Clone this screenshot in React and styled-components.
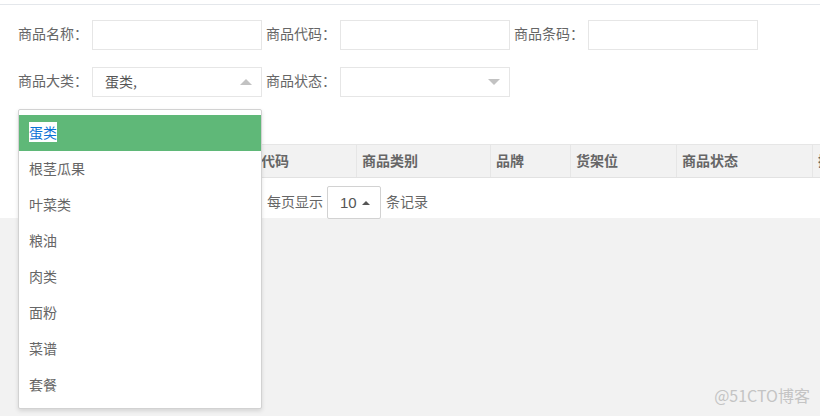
import React from "react";
import styled, { createGlobalStyle } from "styled-components";

const Global = createGlobalStyle`
  html, body { margin: 0; padding: 0; }
  body {
    background: #f2f2f2;
    font-family: "Noto Sans CJK SC", "Microsoft YaHei", "Noto Sans", sans-serif;
    font-size: 14px;
    color: #666;
    overflow: hidden;
  }
`;

const Page = styled.div`
  width: 820px;
  height: 416px;
  position: relative;
  overflow: hidden;
  background: #f2f2f2;
`;

const TopStrip = styled.div`
  height: 4px;
  background: #fff;
  border-bottom: 1px solid #e4e7eb;
`;

const Panel = styled.div`
  position: relative;
  background: #fff;
  height: 213px;
  box-sizing: border-box;
  padding: 15px 0 0 14px;
`;

const FormRow = styled.div`
  display: flex;
  height: 30px;
  margin-bottom: ${(p) => p.$mb || 0}px;
`;

const FormItem = styled.div`
  display: flex;
  align-items: center;
  padding-left: 4px;
`;

const Label = styled.label`
  width: 74px;
  height: 30px;
  box-sizing: border-box;
  padding-bottom: 4px;
  display: flex;
  align-items: center;
  font-size: 14px;
  color: #666;
  white-space: nowrap;
`;

const Input = styled.div`
  width: 170px;
  height: 30px;
  box-sizing: border-box;
  border: 1px solid #e6e6e6;
  background: #fff;
  position: relative;
  display: flex;
  align-items: center;
  padding: 0 0 3px 12px;
  color: #555;
  font-size: 14px;
`;

const Arrow = styled.span`
  position: absolute;
  right: ${(p) => p.$right}px;
  top: 50%;
  margin-top: -3px;
  width: 0;
  height: 0;
  border-left: 6px solid transparent;
  border-right: 6px solid transparent;
  ${(p) =>
    p.$up
      ? "border-bottom: 6px solid #c2c2c2;"
      : "border-top: 6px solid #c2c2c2;"}
`;

const Table = styled.div`
  margin-top: 47px;
  margin-left: 4px;
  display: grid;
  grid-template-columns: 42px 168px 129px 134px 80px 106px 136px 100px;
  height: 34px;
  box-sizing: border-box;
  border-top: 1px solid #e6e6e6;
  border-bottom: 1px solid #e2e2e2;
  background: #f2f2f2;
`;

const Th = styled.div`
  display: flex;
  align-items: center;
  padding: 0 0 2px 5px;
  font-weight: 700;
  color: #666;
  font-size: 14px;
  white-space: nowrap;
  overflow: hidden;
  border-right: 1px solid #e6e6e6;
`;

const Pager = styled.div`
  display: flex;
  align-items: center;
  margin-top: 8px;
  margin-left: 4px;
  height: 33px;
  font-size: 14px;
  color: #666;
`;

const PagerText = styled.span`
  margin: 0 ${(p) => p.$mr || 0}px 0 ${(p) => p.$ml || 0}px;
  padding-bottom: 3px;
  white-space: nowrap;
`;

const SizeSelect = styled.div`
  width: 54px;
  height: 33px;
  box-sizing: border-box;
  border: 1px solid #d2d2d2;
  border-radius: 2px;
  display: flex;
  align-items: center;
  padding-left: 12px;
  gap: 5px;
  color: #555;
  font-family: "Liberation Sans", Arial, sans-serif;
  font-size: 15px;
`;

const SmallUp = styled.span`
  width: 0;
  height: 0;
  border-left: 4px solid transparent;
  border-right: 4px solid transparent;
  border-bottom: 4px solid #555;
`;

const Dropdown = styled.ul`
  position: absolute;
  left: 18px;
  top: 104px;
  width: 244px;
  box-sizing: border-box;
  margin: 0;
  padding: 5px 0;
  list-style: none;
  background: #fff;
  border: 1px solid #d2d2d2;
  border-radius: 2px;
  box-shadow: 0 2px 4px rgba(0, 0, 0, 0.12);
  z-index: 10;
`;

const Option = styled.li`
  height: 36px;
  line-height: 34px;
  padding-left: 10px;
  color: #666;
  font-size: 14px;
  background: ${(p) => (p.$active ? "#5fb878" : "#fff")};
`;

const Selected = styled.span`
  background: #fff;
  color: #0a72d6;
`;

const Watermark = styled.div`
  position: absolute;
  right: 10px;
  bottom: 9px;
  color: #c4c4c4;
  font-size: 16px;
  font-family: "Noto Sans CJK SC", "Liberation Sans", sans-serif;
`;

const options = ["蛋类", "根茎瓜果", "叶菜类", "粮油", "肉类", "面粉", "菜谱", "套餐"];
const headers = ["", "", "商品代码", "商品类别", "品牌", "货架位", "商品状态", "操作"];

export default function App() {
  return (
    <Page>
      <Global />
      <TopStrip />
      <Panel>
        <FormRow $mb={17}>
          <FormItem>
            <Label>商品名称：</Label>
            <Input />
          </FormItem>
          <FormItem>
            <Label>商品代码：</Label>
            <Input />
          </FormItem>
          <FormItem>
            <Label>商品条码：</Label>
            <Input />
          </FormItem>
        </FormRow>
        <FormRow>
          <FormItem>
            <Label>商品大类：</Label>
            <Input>
              蛋类,
              <Arrow $up $right={9} />
            </Input>
          </FormItem>
          <FormItem>
            <Label>商品状态：</Label>
            <Input>
              <Arrow $right={9} />
            </Input>
          </FormItem>
        </FormRow>
        <Table>
          {headers.map((h, i) => (
            <Th key={i}>{h}</Th>
          ))}
        </Table>
        <Pager>
          <PagerText $ml={249} $mr={4}>每页显示</PagerText>
          <SizeSelect>
            10
            <SmallUp />
          </SizeSelect>
          <PagerText $ml={5}>条记录</PagerText>
        </Pager>
        <Dropdown>
          {options.map((o, i) => (
            <Option key={o} $active={i === 0}>
              {i === 0 ? <Selected>{o}</Selected> : o}
            </Option>
          ))}
        </Dropdown>
      </Panel>
      <Watermark>@51CTO博客</Watermark>
    </Page>
  );
}
